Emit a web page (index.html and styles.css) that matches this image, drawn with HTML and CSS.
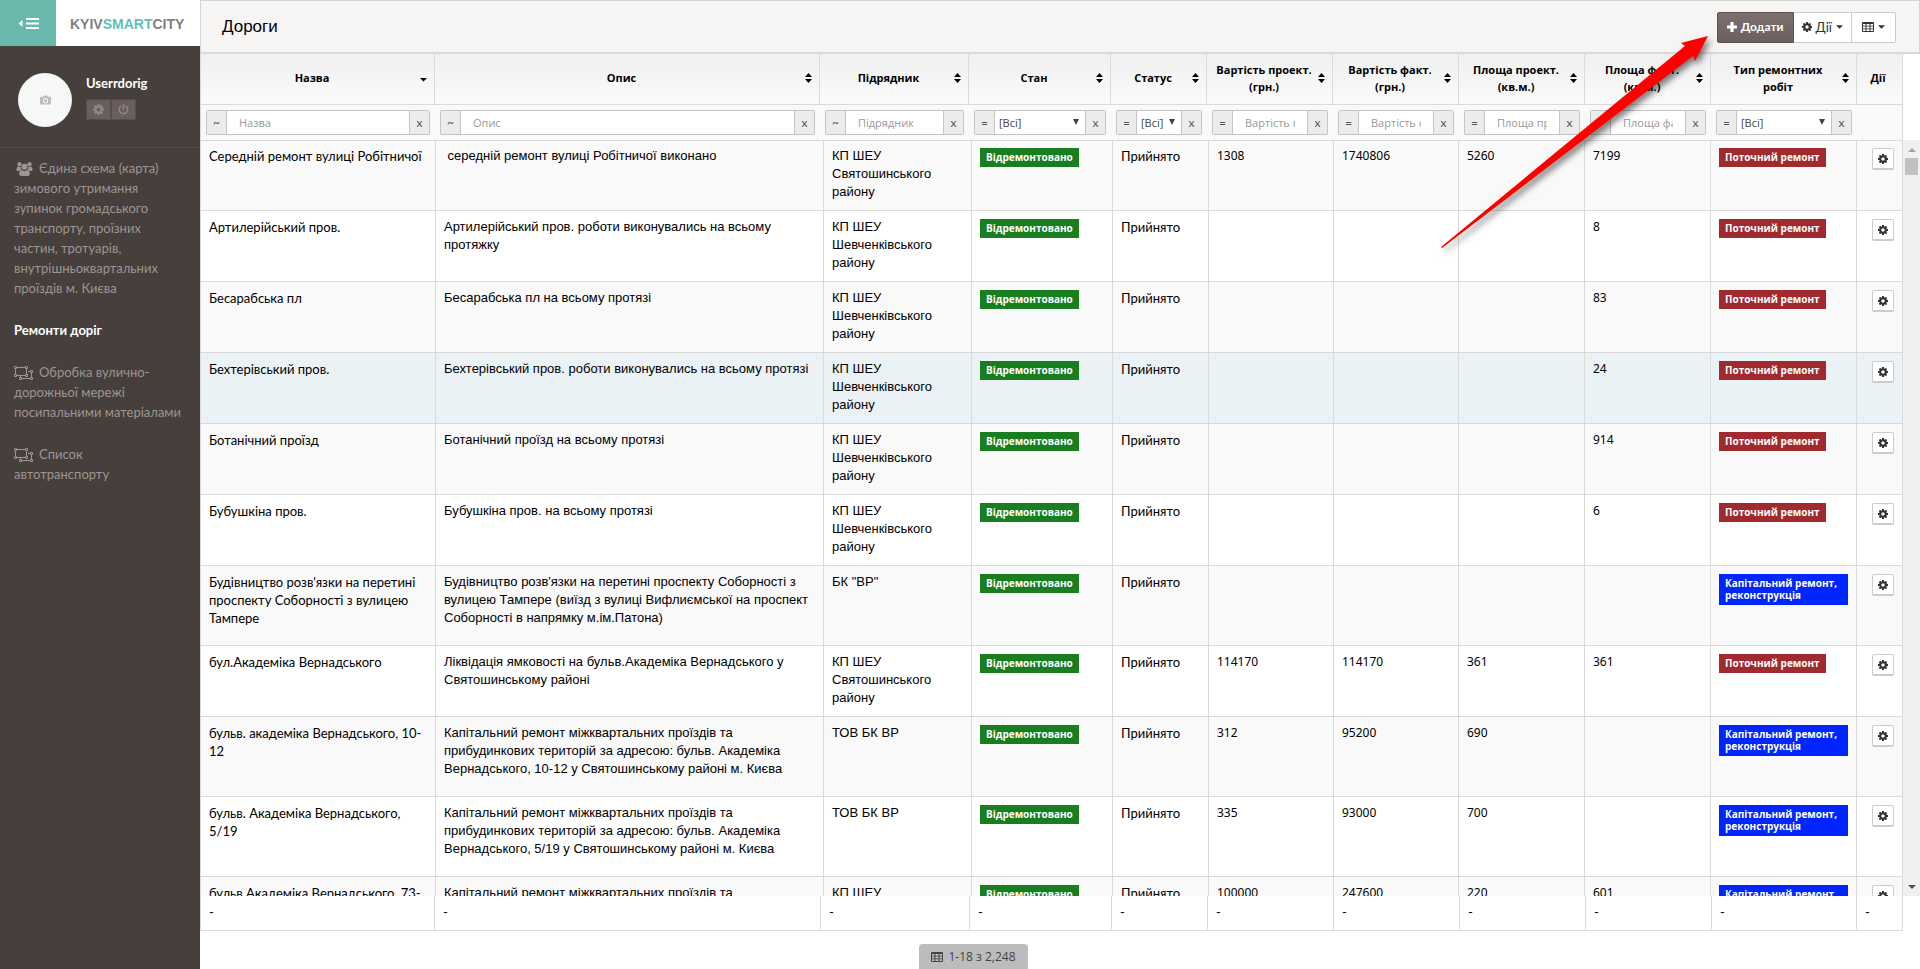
FILE: index.html
```html
<!DOCTYPE html>
<html lang="uk">
<head>
    <meta charset="UTF-8">
    <title>Дороги</title>
    <link rel="stylesheet" href="styles.css">
</head>
<body>
    <!-- icon set -->
    <svg class="sprite" aria-hidden="true">
        <symbol id="i-cog" viewBox="0 128 1536 1536"><path d="M1024 896q0-106-75-181t-181-75-181 75-75 181 75 181 181 75 181-75 75-181zm512-109v222q0 12-8 23t-20 13l-185 28q-19 54-39 91 35 50 107 138 10 12 10 25t-9 23q-27 37-99 108t-94 71q-12 0-26-9l-138-108q-44 23-91 38-16 136-29 186-7 28-36 28h-222q-14 0-24.5-8.5t-11.5-21.5l-28-184q-49-16-90-37l-141 107q-10 9-25 9-14 0-25-11-126-114-165-168-7-10-7-23 0-12 8-23 15-21 51-66.5t54-70.5q-27-50-41-99l-183-27q-13-2-21-12.5t-8-23.5v-222q0-12 8-23t19-13l186-28q14-46 39-92-40-57-107-138-10-12-10-24 0-10 9-23 26-36 98.500-107.500t94.500-71.500q13 0 26 10l138 107q44-23 91-38 16-136 29-186 7-28 36-28h222q14 0 24.500 8.500t11.500 21.500l28 184q49 16 90 37l142-107q9-9 24-9 13 0 25 10 129 119 165 170 7 8 7 22 0 12-8 23-15 21-51 66.500t-54 70.500q26 50 41 98l183 28q13 2 21 12.500t8 23.500z"/></symbol>
        <symbol id="i-plus" viewBox="0 0 10 10"><path d="M4 0h2q.6 0 .6.6v2.800h2.800q.6 0 .6.6v2q0 .6-.6.6H6.600v2.800q0 .6-.6.6H4q-.6 0-.6-.6V6.600H.6Q0 6.600 0 6V4q0-.6.6-.6h2.800V.6Q3.400 0 4 0z"/></symbol>
        <symbol id="i-power" viewBox="0 0 12 12"><path d="M3.300 2.300a4.600 4.600 0 1 0 5.400 0M6 .8v5" fill="none" stroke="currentColor" stroke-width="1.700" stroke-linecap="round"/></symbol>
        <symbol id="i-table" viewBox="0 0 12 10"><path fill-rule="evenodd" d="M1 0h10q1 0 1 1v8q0 1-1 1H1q-1 0-1-1V1q0-1 1-1zM1 2v1.700h2.500V2zm3.500 0v1.700h3V2zm4 0v1.700H11V2zM1 4.600v1.800h2.500V4.600zm3.500 0v1.800h3V4.600zm4 0v1.800H11V4.600zM1 7.300V9h2.500V7.300zm3.500 0V9h3V7.300zm4 0V9H11V7.300z"/></symbol>
        <symbol id="i-camera" viewBox="0 0 12 10"><path fill-rule="evenodd" d="M3.500 1.500L4 .4Q4.200 0 4.700 0h2.600q.5 0 .7.4l.5 1.100h2q1.500 0 1.500 1.500v5.500q0 1.500-1.500 1.500h-9Q0 10 0 8.500V3q0-1.500 1.500-1.500zM6 2.800a2.900 2.900 0 1 0 0 5.800 2.900 2.900 0 0 0 0-5.800zm0 1a1.900 1.900 0 1 1 0 3.800 1.900 1.900 0 0 1 0-3.800z"/></symbol>
        <symbol id="i-users" viewBox="0 0 16 14"><circle cx="3" cy="2.200" r="2.100"/><circle cx="13" cy="2.200" r="2.100"/><path d="M0 8q0-3.600 1.800-3.600.7.500 2.400.3Q4 7 5 8q-1.600 0-2.400 1H1.300Q0 9 0 8zM16 8q0-3.600-1.800-3.600-.7.500-2.400.3Q12 7 11 8q1.600 0 2.400 1h1.300q1.300 0 1.300-1z"/><circle cx="8" cy="4.800" r="3"/><path d="M2.700 12q0-4 2.600-4Q8 10 10.700 8q2.600 0 2.600 4 0 2-2 2H4.700q-2 0-2-2z"/></symbol>
        <symbol id="i-group" viewBox="0 0 19 14"><g fill="none" stroke="currentColor"><path d="M3 1.500h8M1.500 3v5M3 9.500h8M12.500 3v5M14 5.500h2M17.500 7v4M8 12.500h8M6.500 10v1"/><path d="M.5.500h2v2h-2zM11.500.500h2v2h-2zM.5 8.500h2v2h-2zM11.500 8.500h2v2h-2zM16.500 4.500h2v2h-2zM16.500 11.500h2v2h-2zM5.500 11.500h2v2h-2z"/></g></symbol>
        <symbol id="i-menu" viewBox="0 0 21 11"><path d="M4.500 2v7L.5 5.500zM8 0h13v2H8zM8 4.500h13v2H8zM8 9h13v2H8z"/></symbol>
        <symbol id="i-sort" viewBox="0 0 7 10"><path d="M3.500 0L7 4H0zM0 6h7L3.500 10z"/></symbol>
        <symbol id="i-desc" viewBox="0 0 7 10"><path d="M0 5h7L3.500 8.500z"/></symbol>
        <symbol id="i-caret" viewBox="0 0 8 4"><path d="M0 0h8L4 4z"/></symbol>
    </svg>

    <div class="page">
        <aside class="sidebar">
            <div class="brand">
                <button class="menu-toggle" aria-label="Меню"><svg><use href="#i-menu"/></svg></button>
                <a class="logo" href="#">KYIV<span>SMART</span>CITY</a>
            </div>
            <div class="user">
                <div class="avatar"><svg><use href="#i-camera"/></svg></div>
                <div>
                    <div class="user-name">Userrdorig</div>
                    <div class="user-buttons">
                        <button aria-label="Налаштування"><svg><use href="#i-cog"/></svg></button>
                        <button aria-label="Вийти"><svg><use href="#i-power"/></svg></button>
                    </div>
                </div>
            </div>
            <nav class="nav">
                <a href="#"><svg class="users"><use href="#i-users"/></svg>Єдина схема (карта) зимового утримання зупинок громадського транспорту, проїзних частин, тротуарів, внутрішньоквартальних проїздів м. Києва</a>
                <a href="#" class="active">Ремонти доріг</a>
                <a href="#"><svg><use href="#i-group"/></svg>Обробка вулично-<br>дорожньої мережі посипальними матеріалами</a>
                <a href="#"><svg><use href="#i-group"/></svg>Список<br>автотранспорту</a>
            </nav>
        </aside>

        <main class="main">
            <header class="topbar">
                <h1>Дороги</h1>
                <div class="toolbar">
                    <button class="add"><svg><use href="#i-plus"/></svg>Додати</button>
                    <button><svg><use href="#i-cog"/></svg>Дії<svg class="caret"><use href="#i-caret"/></svg></button>
                    <button><svg class="table-icon"><use href="#i-table"/></svg><svg class="caret"><use href="#i-caret"/></svg></button>
                </div>
            </header>

            <table class="grid grid-head">
                <colgroup>
                    <col class="c-name"><col><col class="c-contractor"><col class="c-state"><col class="c-status">
                    <col class="c-num"><col class="c-num"><col class="c-num"><col class="c-num"><col class="c-type"><col class="c-act">
                </colgroup>
                <thead>
                    <tr id="titles"></tr>
                    <tr id="filters"></tr>
                </thead>
            </table>

            <div class="scroll-area">
                <div class="scroll-view">
                    <table class="grid grid-body">
                        <colgroup>
                            <col class="c-name"><col><col class="c-contractor"><col class="c-state"><col class="c-status">
                            <col class="c-cost"><col class="c-cost"><col class="c-num"><col class="c-num"><col class="c-type"><col class="c-act">
                        </colgroup>
                        <tbody id="rows"></tbody>
                    </table>
                </div>
                <div class="scrollbar"><i class="up"></i><i class="thumb"></i><i class="down"></i></div>
            </div>

            <table class="grid grid-foot">
                <colgroup>
                    <col class="c-name"><col><col class="c-contractor"><col class="c-state"><col class="c-status">
                    <col class="c-num"><col class="c-num"><col class="c-num"><col class="c-num"><col class="c-type"><col class="c-act">
                </colgroup>
                <tbody>
                    <tr><td>-</td><td>-</td><td>-</td><td>-</td><td>-</td><td>-</td><td>-</td><td>-</td><td>-</td><td>-</td><td>-</td></tr>
                </tbody>
            </table>

            <div class="pager"><svg><use href="#i-table"/></svg>1-18 з 2,248</div>
        </main>
    </div>

    <svg class="arrow" viewBox="0 0 284 232">
        <polygon points="1,219 245,18 241,15 268,8 255,33 253,28 2,220" fill="#f00"/>
    </svg>

    <script src="script.js"></script>
</body>
</html>
```
FILE: styles.css
```css
* {
    box-sizing: border-box;
}
body {
    margin: 0;
    font-family: 'Trebuchet MS', Lato, 'Noto Sans', sans-serif;
    font-size: 13px;
    line-height: 18px;
    color: #000;
    background: #fff;
}
svg {
    fill: currentColor;
}
.sprite {
    display: none;
}
button, input, select {
    font: inherit;
    margin: 0;
}
.page {
    display: flex;
    height: 100vh;
    overflow: hidden;
}

/* sidebar */
.sidebar {
    flex: 0 0 200px;
    background: #463f3c;
    color: #9d9592;
}
.brand {
    display: flex;
    height: 46px;
    background: #fff;
}
.menu-toggle {
    width: 56px;
    padding: 0;
    border: 0;
    background: #69b8ac;
    color: #fff;
}
.menu-toggle svg {
    display: block;
    width: 21px;
    height: 11px;
    margin: 0 auto;
}
.logo {
    flex: 1;
    padding-left: 14px;
    font: bold 14px/48px 'Liberation Sans', Arial, sans-serif;
    color: #808080;
    text-decoration: none;
}
.logo span {
    color: #5fc3b3;
}
.user {
    display: flex;
    gap: 14px;
    padding: 27px 18px 20px;
    border-bottom: 1px solid #524b48;
}
.avatar {
    display: flex;
    width: 54px;
    height: 54px;
    border-radius: 50%;
    align-items: center;
    justify-content: center;
    background: #f5f8f7;
    color: #b9bcbb;
}
.avatar svg {
    width: 11px;
    height: 10px;
}
.user-name {
    color: #fff;
    font-weight: bold;
    line-height: 20px;
}
.user-buttons {
    display: flex;
    margin-top: 6px;
}
.user-buttons button {
    width: 25px;
    height: 21px;
    padding: 0;
    border: 1px solid #574d4b;
    background: #695e5c;
    color: #8f8583;
}
.user-buttons svg {
    display: block;
    width: 11px;
    height: 11px;
    margin: 0 auto;
}
.nav a {
    display: block;
    padding: 10px 14px 12px;
    color: inherit;
    line-height: 20px;
    text-decoration: none;
}
.nav svg {
    width: 19px;
    height: 14px;
    margin-right: 6px;
    vertical-align: -3px;
}
.nav .users {
    margin-left: 1px;
    margin-right: 5px;
}
.nav .active {
    color: #fff;
    font-weight: bold;
}

/* title and buttons */
.main {
    flex: 1;
    min-width: 0;
    display: flex;
    flex-direction: column;
}
.topbar {
    flex: none;
    display: flex;
    align-items: center;
    justify-content: space-between;
    height: 54px;
    padding: 1px 23px 0 21px;
    border: 1px solid #d5d5d5;
    border-bottom: 2px solid #dadada;
    background: #f6f5f3;
}
h1 {
    margin: 0;
    font: 17px/24px 'Liberation Sans', Arial, sans-serif;
}
.toolbar {
    display: flex;
}
.toolbar button {
    display: flex;
    align-items: center;
    gap: 4px;
    height: 31px;
    padding: 0 8px;
    border: 1px solid #ccc;
    border-left: 0;
    background: #fff;
    color: #333;
    font-size: 13px;
}
.toolbar .add {
    padding: 0 9px;
    border: 1px solid #5c5150;
    border-radius: 2px 0 0 2px;
    background: linear-gradient(#7b706e, #6b605e);
    color: #fff;
    font-size: 12px;
    font-weight: bold;
}
.toolbar button:last-child {
    padding: 0 10px;
    border-radius: 0 2px 2px 0;
}
.toolbar svg {
    width: 10px;
    height: 10px;
}
.toolbar .table-icon {
    width: 12px;
}
.toolbar .caret {
    width: 7px;
    height: 4px;
}

/* grid */
.grid {
    flex: none;
    width: calc(100% - 17px);
    border-left: 1px solid #dadada;
    border-spacing: 0;
    table-layout: fixed;
}
.c-name { width: 234px; }
.c-contractor { width: 149px; }
.c-state { width: 142px; }
.c-status { width: 96px; }
.c-num { width: 126px; }
.c-type { width: 146px; }
.c-act { width: 46px; }
.grid th, .grid td {
    border-right: 1px solid #dadada;
    font-weight: normal;
    text-align: left;
}
.grid-head #titles th {
    height: 51px;
    padding: 0 7px 3px 4px;
    border-bottom: 1px solid #dadada;
    background: linear-gradient(#f0f0f0, #fafafa);
    font: bold 11px/17px 'Open Sans', sans-serif;
    text-align: center;
}
#titles .sorted {
    background: linear-gradient(#e4e4e4, #ececec);
}
.title {
    display: flex;
    align-items: center;
    gap: 1px;
}
.title span {
    flex: 1;
    padding: 0 3px;
}
.title svg {
    flex: none;
    width: 7px;
    height: 10px;
}
.grid-head #filters td {
    height: 35px;
    padding: 5px;
    border-right: 0;
    background: #f9f9f9;
}
#filters td:last-child {
    border-right: 1px solid #dadada;
}
.filter {
    display: flex;
    height: 25px;
    border: 1px solid #c4c4c4;
    border-radius: 2px;
    background: #fff;
    color: #555;
}
.filter button {
    flex: 0 0 20px;
    padding: 0;
    border: 0;
    border-right: 1px solid #c4c4c4;
    background: #ececec;
    color: #555;
    font-size: 12px;
}
.filter button:last-child {
    border-right: 0;
    border-left: 1px solid #c4c4c4;
}
.filter input {
    flex: 1;
    width: 0;
    min-width: 0;
    padding: 0 12px;
    border: 0;
    background: transparent;
    font: 11px 'Open Sans', sans-serif;
}
.filter input::placeholder {
    color: #999;
}
.pick {
    position: relative;
    flex: 1;
    display: flex;
    min-width: 0;
}
.pick select {
    flex: 1;
    min-width: 0;
    padding: 0 4px;
    border: 0;
    appearance: none;
    background: transparent;
    color: #444;
    font: 11px 'Open Sans', sans-serif;
}
.pick::after {
    content: '';
    position: absolute;
    right: 6px;
    top: 8px;
    border: 3px solid transparent;
    border-top: 6px solid #444;
    border-bottom: 0;
}

.scroll-area {
    flex: 1;
    display: flex;
    min-height: 0;
    overflow: hidden;
}
.scroll-view {
    flex: 1;
    min-width: 0;
    overflow: hidden;
    border-top: 1px solid #dadada;
}
.grid-body {
    width: 100%;
}
.grid-body .c-name { width: 235px; }
.grid-body .c-contractor { width: 148px; }
.grid-body .c-state { width: 141px; }
.grid-body .c-cost { width: 125px; }
.grid-body td {
    height: 71px;
    padding: 7px 8px;
    border-bottom: 1px solid #dadada;
    vertical-align: top;
}
.grid-body tr:first-child td {
    height: 70px;
    padding-top: 6px;
}
.grid-body .tall td {
    height: 80px;
}
.grid-body tr:nth-child(odd) {
    background: #f9f9f9;
}
.grid-body .hover {
    background: #ebf2f6;
}
.grid-body td:nth-child(2), .grid-body td:nth-child(3) {
    font-family: Arial, 'Liberation Sans', sans-serif;
}
.grid-body .num {
    font: 12px/18px 'Noto Sans', sans-serif;
}
.grid-body td:last-child {
    text-align: right;
}
.badge {
    display: block;
    width: fit-content;
    margin-top: 1px;
    padding: 3px 6px 4px;
    color: #fff;
    font: bold 10px/12px 'Open Sans', sans-serif;
}
.green { background: #187e1f; }
.red { background: #a02a2e; }
.blue {
    width: auto;
    background: #0026ff;
}
.row-btn {
    width: 22px;
    height: 22px;
    margin-top: 1px;
    padding: 0;
    border: 1px solid #ccc;
    border-bottom-width: 2px;
    border-radius: 2px;
    background: #fff;
    color: #333;
    vertical-align: top;
}
.row-btn svg {
    display: block;
    width: 10px;
    height: 10px;
    margin: 0 auto;
}
.scrollbar {
    flex: 0 0 17px;
    display: flex;
    flex-direction: column;
    align-items: center;
    padding: 8px 0 7px;
    background: #f0f0f0;
}
.scrollbar .up {
    border: 4px solid transparent;
    border-top: 0;
    border-bottom-color: #a3a3a3;
}
.scrollbar .thumb {
    width: 13px;
    height: 17px;
    margin-top: 6px;
    background: #c1c1c1;
}
.scrollbar .down {
    margin-top: auto;
    border: 4px solid transparent;
    border-bottom: 0;
    border-top-color: #505050;
}
.grid-foot .c-type { width: 145px; }
.grid-foot td {
    height: 35px;
    padding: 0 8px 2px;
    border-bottom: 1px solid #dadada;
}

.pager {
    flex: none;
    align-self: center;
    display: flex;
    align-items: center;
    gap: 5px;
    height: 25px;
    margin: 13px 173px 0 0;
    padding: 0 12px;
    border-radius: 4px 4px 0 0;
    background: #bcbcbc;
    color: #444;
    font: 12px 'Open Sans', sans-serif;
}
.pager svg {
    width: 12px;
    height: 10px;
}

/* pointer to the add button */
.arrow {
    position: absolute;
    top: 28px;
    right: 196px;
    width: 284px;
    height: 232px;
    filter: drop-shadow(3px 4px 3px rgba(0, 0, 0, 0.5));
    pointer-events: none;
}
```
FILE: script.js
```js
const columns = [
    ['Назва', '~'],
    ['Опис', '~'],
    ['Підрядник', '~'],
    ['Стан', '=', 'select'],
    ['Статус', '=', 'select'],
    ['Вартість проект. (грн.)', '='],
    ['Вартість факт. (грн.)', '='],
    ['Площа проект. (кв.м.)', '='],
    ['Площа факт. (кв.м.)', '='],
    ['Тип ремонтних робіт', '=', 'select'],
];

const kp1 = 'КП ШЕУ Святошинського району';
const kp2 = 'КП ШЕУ Шевченківського району';
const cur = 'Поточний ремонт';
const cap = 'Капітальний ремонт, реконструкція';

// name, description, contractor, cost plan, cost fact, area plan, area fact, type
const roads = [
    ['Середній ремонт вулиці Робітничої', '&nbsp;середній ремонт вулиці Робітничої виконано', kp1, '1308', '1740806', '5260', '7199', cur],
    ['Артилерійський пров.', 'Артилерійський пров. роботи виконувались на всьому протяжку', kp2, '', '', '', '8', cur],
    ['Бесарабська пл', 'Бесарабська пл на всьому протязі', kp2, '', '', '', '83', cur],
    ['Бехтерівський пров.', 'Бехтерівський пров. роботи виконувались на всьому протязі', kp2, '', '', '', '24', cur],
    ['Ботанічний проїзд', 'Ботанічний проїзд на всьому протязі', kp2, '', '', '', '914', cur],
    ['Бубушкіна пров.', 'Бубушкіна пров. на всьому протязі', kp2, '', '', '', '6', cur],
    ["Будівництво розв'язки на перетині проспекту Соборності з вулицею Тампере", "Будівництво розв'язки на перетині проспекту Соборності з вулицею Тампере (виїзд з вулиці Вифлиємської на проспект Соборності в напрямку м.ім.Патона)", 'БК "ВР"', '', '', '', '', cap],
    ['бул.Академіка Вернадського', 'Ліквідація ямковості на бульв.Академіка Вернадського у Святошинському районі', kp1, '114170', '114170', '361', '361', cur],
    ['бульв. академіка Вернадського, 10-12', 'Капітальний ремонт міжквартальних проїздів та прибудинкових територій за адресою: бульв. Академіка Вернадського, 10-12 у Святошинському районі м. Києва', 'ТОВ БК ВР', '312', '95200', '690', '', cap],
    ['бульв. Академіка Вернадського, 5/19', 'Капітальний ремонт міжквартальних проїздів та прибудинкових територій за адресою: бульв. Академіка Вернадського, 5/19 у Святошинському районі м. Києва', 'ТОВ БК ВР', '335', '93000', '700', '', cap],
    ['бульв Академіка Вернадського, 73-', 'Капітальний ремонт міжквартальних проїздів та', 'КП ШЕУ', '100000', '247600', '220', '601', cap],
];

document.getElementById('titles').innerHTML = columns.map((c, i) => `
    <th class="${i === 0 ? 'sorted' : ''}"><div class="title"><span>${c[0]}</span><svg><use href="#${i === 0 ? 'i-desc' : 'i-sort'}"/></svg></div></th>
`).join('') + '<th>Дії</th>';

document.getElementById('filters').innerHTML = columns.map(c => {
    const field = c[2]
        ? `<span class="pick"><select aria-label="${c[0]}"><option>[Всі]</option></select></span>`
        : `<input type="text" aria-label="${c[0]}" placeholder="${c[0]}">`;
    return `<td><div class="filter"><button>${c[1]}</button>${field}<button>x</button></div></td>`;
}).join('') + '<td></td>';

document.getElementById('rows').innerHTML = roads.map((r, i) => `
    <tr class="${r[7] === cap ? 'tall' : ''} ${i === 3 ? 'hover' : ''}">
        <td>${r[0]}</td>
        <td>${r[1]}</td>
        <td>${r[2]}</td>
        <td><span class="badge green">Відремонтовано</span></td>
        <td>Прийнято</td>
        <td class="num">${r[3]}</td>
        <td class="num">${r[4]}</td>
        <td class="num">${r[5]}</td>
        <td class="num">${r[6]}</td>
        <td><span class="badge ${r[7] === cap ? 'blue' : 'red'}">${r[7]}</span></td>
        <td><button class="row-btn" aria-label="Дії"><svg><use href="#i-cog"/></svg></button></td>
    </tr>
`).join('');
```
